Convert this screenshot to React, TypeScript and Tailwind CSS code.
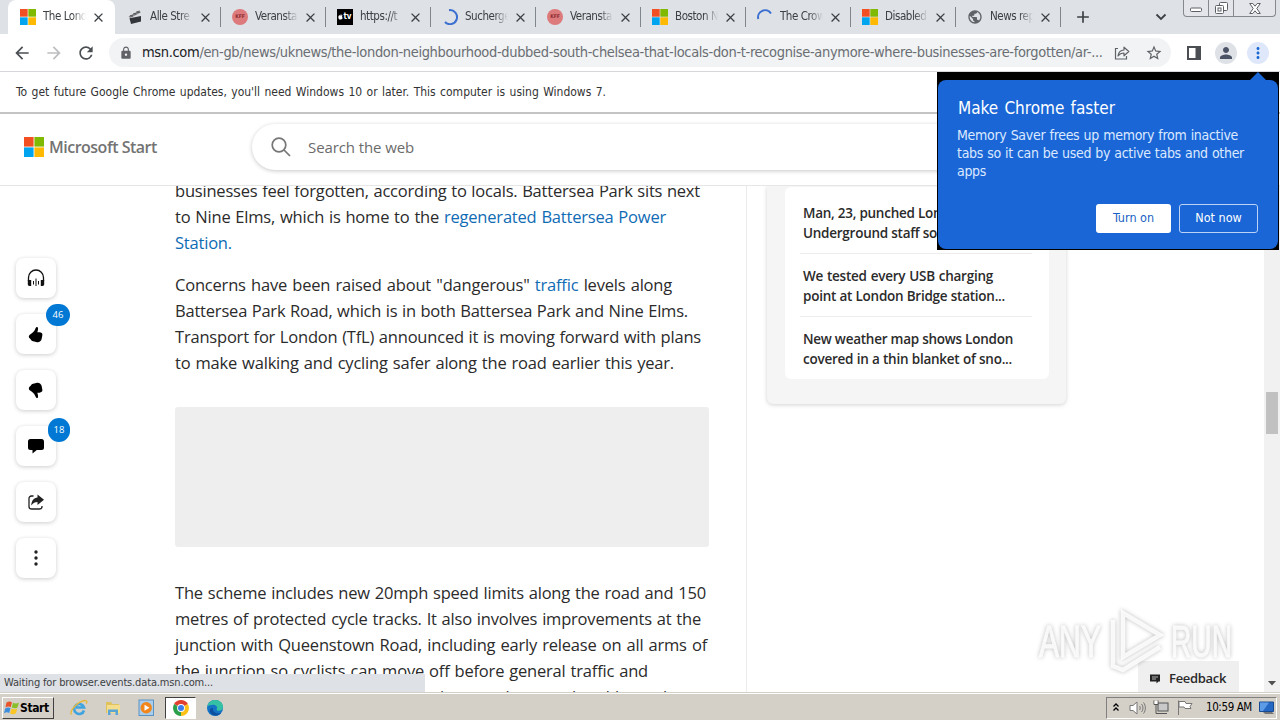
import type { ReactNode } from "react";
import {
  MdAdd,
  MdArrowBack,
  MdArrowForward,
  MdClose,
  MdLock,
  MdMoreVert,
  MdPerson,
  MdPublic,
  MdRefresh,
  MdStarBorder,
} from "react-icons/md";

function MicrosoftLogo({ className }: { className: string }) {
  return (
    <svg viewBox="0 0 20 20" className={className}>
      <path d="M0 0h9.6v9.6H0z" fill="#f25022" />
      <path d="M10.4 0H20v9.6h-9.6z" fill="#7fba00" />
      <path d="M0 10.4h9.6V20H0z" fill="#00a4ef" />
      <path d="M10.4 10.4H20V20h-9.6z" fill="#ffb900" />
    </svg>
  );
}

function Clapper() {
  return (
    <svg viewBox="0 0 16 16" className="h-4 w-4">
      <path d="M1.5 7.5 12.5 1.2 13.8 3.6 3.2 9z" fill="#8a8c8f" />
      <path d="m3 6.7 3 .3M6.3 4.7l3 .3M9.5 2.9l3 .3" stroke="#444" strokeWidth="1.1" />
      <path d="M2.5 9.2 14 7v5.6L4 15z" fill="#33373b" />
    </svg>
  );
}

function RedBadge() {
  return (
    <span className="flex h-4 w-4 items-center justify-center rounded-full bg-[#dc7a7c] text-[5px] font-bold text-[#8c2b30]">
      KFF
    </span>
  );
}

function AppleTv() {
  return (
    <span className="flex h-4 w-4 items-center justify-center bg-black text-[8px] font-bold text-white">
      <svg viewBox="0 0 6 7" className="h-[6px] w-[5px]">
        <path d="M3 1.8C2 1.2.4 1.6.4 3.7S1.8 6.8 3 6.4c1.2.4 2.4-.8 2.6-2-1-.5-1-1.7-.1-2.3C4.8 1.3 3.8 1.4 3 1.8zM3 1.4C3 .6 3.5.1 4.2 0c0 .8-.5 1.3-1.2 1.4z" fill="#fff" />
      </svg>
      tv
    </span>
  );
}

function Spinner({ d }: { d: string }) {
  return (
    <svg viewBox="0 0 16 16" className="h-4 w-4">
      <path d={d} fill="none" stroke="#3b6fd0" strokeWidth="2" />
    </svg>
  );
}

const tabs: { title: string; icon: ReactNode }[] = [
  { title: "Alle Stre", icon: <Clapper /> },
  { title: "Veransta", icon: <RedBadge /> },
  { title: "https://t", icon: <AppleTv /> },
  { title: "Sucherge", icon: <Spinner d="M7 1.200A7 7 0 1 1 3 13" /> },
  { title: "Veransta", icon: <RedBadge /> },
  { title: "Boston N", icon: <MicrosoftLogo className="h-4 w-4" /> },
  { title: "The Crow", icon: <Spinner d="M1.300 10A7 7 0 0 1 14 4.500" /> },
  { title: "Disabled", icon: <MicrosoftLogo className="h-4 w-4" /> },
  { title: "News rep", icon: <MdPublic className="h-4 w-4 text-[#5f6368]" /> },
];

function TabBody({ title, icon }: { title: string; icon: ReactNode }) {
  return (
    <>
      <span className="shrink-0">{icon}</span>
      <span className="ml-[7px] w-[43px] shrink-0 overflow-hidden whitespace-nowrap text-[11.5px] tracking-[-0.45px] [mask-image:linear-gradient(to_right,black_68%,transparent)]">
        {title}
      </span>
      <MdClose className="ml-[5px] h-[15px] w-[15px] shrink-0 text-[#3c4043]" />
    </>
  );
}

function TabStrip() {
  return (
    <div className="flex h-[34px] bg-[#dee1e6] text-[#3c4043]">
      <div className="ml-2 flex w-[107px] items-center rounded-t-lg bg-white pl-3">
        <TabBody title="The Lond" icon={<MicrosoftLogo className="h-4 w-4" />} />
      </div>
      {tabs.map((t, i) => (
        <div key={i} className="flex w-[105px] items-center pl-3">
          <TabBody title={t.title} icon={t.icon} />
          <span className="-mr-px ml-auto h-5 w-px bg-[#80868b]" />
        </div>
      ))}
      <div className="flex flex-1 items-center pl-[13px]">
        <MdAdd className="h-[20px] w-[20px]" />
        <svg viewBox="0 0 12 8" className="ml-[62px] h-2 w-3">
          <path d="m1.500 1.500 4.500 4.500 4.500-4.500" fill="none" stroke="#3c4043" strokeWidth="1.800" />
        </svg>
        <div className="ml-4 flex h-[17px] w-[93px] self-start rounded-b-[4px] border border-t-0 border-[#85888d] bg-[#e3e5ea]">
          <div className="flex w-[25px] items-center justify-center border-r border-[#85888d]">
            <svg viewBox="0 0 12 10" className="h-[10px] w-3">
              <rect x=".5" y="5" width="11" height="3.500" rx="1" fill="#fff" stroke="#5c6066" />
            </svg>
          </div>
          <div className="flex w-[25px] items-center justify-center border-r border-[#85888d]">
            <svg viewBox="0 0 13 13" className="h-[13px] w-[13px]" fill="#fff" stroke="#5c6066">
              <rect x="4.500" y=".5" width="8" height="8" rx="1" />
              <rect x=".5" y="3.500" width="8" height="8" rx="1" />
              <rect x="3" y="6" width="3" height="3" />
            </svg>
          </div>
          <div className="flex flex-1 items-center justify-center">
            <svg viewBox="0 0 12 11" className="h-[11px] w-3">
              <path d="M.7.500h3.100L6 3.200 8.200.500h3.100L7.800 5.500l3.500 5H8.200L6 7.800l-2.200 2.700H.7l3.500-5z" fill="#fff" stroke="#5c6066" />
            </svg>
          </div>
        </div>
      </div>
    </div>
  );
}

function Toolbar() {
  return (
    <div className="flex h-[38px] items-center border-b border-[#d5d7da] bg-white text-[#5f6368]">
      <MdArrowBack className="ml-3 h-5 w-5 text-[#4b4f53]" />
      <MdArrowForward className="ml-3 h-5 w-5 text-[#bcbec1]" />
      <MdRefresh className="ml-3 h-5 w-5 text-[#4b4f53]" />
      <div className="ml-[13px] flex h-[29px] w-[1062px] items-center rounded-full bg-[#f1f3f4] pl-[10px]">
        <MdLock className="h-[14px] w-[14px]" />
        <div className="ml-[9px] w-[958px] whitespace-nowrap text-[14.5px] tracking-[-0.345px] text-[#6a6e73]">
          <span className="text-[#202124]">msn.com</span>
          /en-gb/news/uknews/the-london-neighbourhood-dubbed-south-chelsea-that-locals-don-t-recognise-anymore-where-businesses-are-forgotten/ar-...
        </div>
        <svg viewBox="0 0 16 16" className="ml-[14px] h-4 w-4 shrink-0" fill="none" stroke="#5f6368" strokeWidth="1.200">
          <path d="M4 3.500H1.500V14h11v-3" />
          <path d="M4 11c.5-4 3-5.800 6-6V2.200L14.800 6.500 10 10.800V8C7.500 8 5.500 9 4 11z" strokeLinejoin="round" />
        </svg>
        <MdStarBorder className="ml-[15px] h-[18px] w-[18px] shrink-0" />
      </div>
      <svg viewBox="0 0 14 14" className="ml-4 h-[14px] w-[14px]">
        <rect x="1" y="1" width="12" height="12" fill="none" stroke="#4b4f53" strokeWidth="2" />
        <rect x="8.500" y="1" width="5" height="12" fill="#4b4f53" />
      </svg>
      <span className="ml-[14px] flex h-[22px] w-[22px] items-center justify-center rounded-full bg-[#dee1e6]">
        <MdPerson className="h-[18px] w-[18px] text-[#4b5366]" />
      </span>
      <span className="ml-[10px] flex h-[22px] w-[22px] items-center justify-center rounded-full bg-[#dfe8fb]">
        <MdMoreVert className="h-[18px] w-[18px] text-[#1a67d2]" />
      </span>
    </div>
  );
}

function SiteHeader() {
  return (
    <div className="flex h-[72px] shrink-0 items-center border-b border-[#e6e6e6] bg-white pb-[5px] font-['Open_Sans','Noto_Sans',sans-serif]">
      <MicrosoftLogo className="ml-6 h-5 w-5" />
      <span className="ml-[5px] text-[16px] font-semibold tracking-[-0.5px] text-[#737373]">Microsoft Start</span>
      <div className="ml-auto mr-[60px] flex h-[46px] w-[968px] items-center rounded-full bg-white pl-[19px] shadow-[0_1px_4px_rgba(0,0,0,0.22)]">
        <svg viewBox="0 0 20 20" className="h-5 w-5" fill="none" stroke="#767676" strokeWidth="1.700">
          <circle cx="8" cy="8" r="6.800" />
          <path d="m13 13 6 6" />
        </svg>
        <span className="ml-[17px] text-[15px] tracking-[-0.1px] text-[#6b6b6b]">Search the web</span>
      </div>
    </div>
  );
}

function RailButton({ children, badge }: { children: ReactNode; badge?: ReactNode }) {
  return (
    <div className="relative flex h-10 w-10 items-center justify-center rounded-lg bg-white shadow-[0_1px_4px_rgba(0,0,0,0.2)]">
      {children}
      {badge}
    </div>
  );
}

const thumb =
  "M8.800.800c.9-.6 1.900 0 1.900 1.400 0 1.500-.4 2.800-.8 4h2.400c1.700 0 3.300 1.200 3 2.700l-.8 4.500c-.5 2.200-2.600 3.700-4.900 3.300l-4.100-.9c-1.500-.3-2.200-1.200-2.700-2.200L1.200 12c-.6-1.300-.3-2.800 1-3.600 2.800-1.700 4.500-3.400 5.400-5.600.4-.9.6-1.600 1.200-2z";

function ActionRail() {
  return (
    <div className="flex w-[175px] flex-col gap-4 pl-4 pt-[72px]">
      <RailButton>
        <svg viewBox="0 0 18 18" className="h-[18px] w-[18px]">
          <path d="M1.500 12V8.500a7.500 7.500 0 0 1 15 0V12" fill="none" stroke="#111" strokeWidth="1.300" />
          <path d="M.800 11h3.400v6H2.500C1.300 17 .800 16 .800 15zM17.200 11h-3.400v6h1.700c1.200 0 1.700-1 1.700-2z" fill="#111" />
          <path d="M6.500 12v3.500M9 9.500v7.500M11.500 12v3.500" stroke="#111" />
        </svg>
      </RailButton>
      <RailButton
        badge={
          <span className="absolute -top-[10px] left-[30px] flex h-[22px] w-6 items-center justify-center rounded-full bg-[#0078d4] text-[9.5px] text-white">
            46
          </span>
        }
      >
        <svg viewBox="0 0 17 17" className="h-[17px] w-4">
          <path d={thumb} />
        </svg>
      </RailButton>
      <RailButton>
        <svg viewBox="0 0 17 17" className="h-[17px] w-4 -scale-y-100">
          <path d={thumb} />
        </svg>
      </RailButton>
      <RailButton
        badge={
          <span className="absolute -top-2 left-8 flex h-6 w-[22px] items-center justify-center rounded-full bg-[#0078d4] text-[9.5px] text-white">
            18
          </span>
        }
      >
        <svg viewBox="0 0 16 16" className="h-4 w-4">
          <path d="M2.500 1h11C15.200 1 16 2 16 3.500v6c0 1.700-.8 2.500-2.500 2.500H8.800L4.500 15.500V12h-2C.800 12 0 11.200 0 9.500v-6C0 2 .800 1 2.500 1z" />
        </svg>
      </RailButton>
      <RailButton>
        <svg viewBox="0 0 16 16" className="h-4 w-4">
          <path d="M5.500 2H3.500C2 2 1 3 1 4.500v8C1 14 2 15 3.500 15h8c1.500 0 2.500-1 2.500-2.500V12" fill="none" stroke="#222" strokeWidth="1.300" />
          <path d="M9.500.500 16 5.700l-6.500 5.200V8C7 8 5 9 3.200 11.500 3.500 6.500 6 3.800 9.500 3.500z" fill="#222" />
        </svg>
      </RailButton>
      <RailButton>
        <svg viewBox="0 0 4 16" className="h-4 w-1" fill="#222">
          <circle cx="2" cy="2" r="1.700" />
          <circle cx="2" cy="8" r="1.700" />
          <circle cx="2" cy="14" r="1.700" />
        </svg>
      </RailButton>
    </div>
  );
}

function Line({ className, children }: { className: string; children: ReactNode }) {
  return <span className={`block whitespace-nowrap [text-align-last:justify] ${className}`}>{children}</span>;
}

function Article() {
  return (
    <div className="-mt-2 w-[534px] shrink-0 text-[16.5px] leading-[26px] tracking-[-0.2px] text-[#2b2b2b]">
      <p>
        <Line className="w-[525px]">businesses feel forgotten, according to locals. Battersea Park sits next</Line>
        <Line className="w-[491px]">
          to Nine Elms, which is home to the <a className="text-[#0f6cb4]">regenerated Battersea Power</a>
        </Line>
        <Line className="w-[57px]">
          <a className="text-[#0f6cb4]">Station.</a>
        </Line>
      </p>
      <p className="mt-4">
        <Line className="w-[497px]">
          Concerns have been raised about "dangerous" <a className="text-[#0f6cb4]">traffic</a> levels along
        </Line>
        <Line className="w-[513px]">Battersea Park Road, which is in both Battersea Park and Nine Elms.</Line>
        <Line className="w-[526px]">Transport for London (TfL) announced it is moving forward with plans</Line>
        <Line className="w-[499px]">to make walking and cycling safer along the road earlier this year.</Line>
      </p>
      <div className="mt-[31px] h-[140px] rounded-[3px] bg-[#eeeeee]" />
      <p className="mt-[33px]">
        <Line className="w-[531px]">The scheme includes new 20mph speed limits along the road and 150</Line>
        <Line className="w-[526px]">metres of protected cycle tracks. It also involves improvements at the</Line>
        <Line className="w-[532px]">junction with Queenstown Road, including early release on all arms of</Line>
        <Line className="w-[473px]">the junction so cyclists can move off before general traffic and</Line>
        <Line className="ml-[265px] w-[235px]">is set to be completed by early</Line>
      </p>
    </div>
  );
}

function RelatedStories() {
  return (
    <div className="h-[218px] w-[299px] rounded-b-md bg-[#f5f5f5] px-[18px] pt-px shadow-[0_1px_4px_rgba(0,0,0,0.18)]">
      <div className="h-[192px] w-[264px] rounded-md bg-white pl-[15px] pr-[17px] pt-4 text-[13.5px] font-semibold leading-5 tracking-[-0.25px] text-[#2b2b2b]">
        <div className="border-b border-[#ededed] pb-[10px] pl-[3px]">
          <Line className="w-[160px]">Man, 23, punched London</Line>
          <Line className="w-[145px]">Underground staff so h</Line>
        </div>
        <div className="border-b border-[#ededed] pb-[10px] pl-[3px] pt-3">
          <Line className="w-[190px]">We tested every USB charging</Line>
          <Line className="w-[202px]">point at London Bridge station...</Line>
        </div>
        <div className="pl-[3px] pt-3">
          <Line className="w-[208px]">New weather map shows London</Line>
          <Line className="w-[209px]">covered in a thin blanket of sno...</Line>
        </div>
      </div>
    </div>
  );
}

function Scrollbar() {
  return (
    <div className="ml-auto flex w-4 flex-col items-center bg-[#f1f1f1]">
      <div className="mt-[206px] h-[42px] w-3 bg-[#c1c1c1]" />
      <svg viewBox="0 0 8 5" className="mb-[6px] mt-auto h-[5px] w-2">
        <path d="M0 0h8L4 4.500z" fill="#505050" />
      </svg>
    </div>
  );
}

function MemorySaver() {
  return (
    <div className="absolute left-[937px] top-[72px] h-[178px] w-[342px] bg-black px-px pt-2 font-['DejaVu_Sans_Condensed','Noto_Sans',sans-serif]">
      <svg viewBox="0 0 18 9" className="absolute left-[312px] top-0 h-[9px] w-[18px]">
        <path d="M0 9 9 0l9 9z" fill="#1a66d6" />
      </svg>
      <div className="h-[169px] rounded-lg bg-[#1a66d6] pl-[19px] pr-5 pt-[17px] text-white">
        <h2 className="pl-px text-[17px] leading-[22px]">
          <Line className="w-[157px]">Make Chrome faster</Line>
        </h2>
        <p className="mt-[7px] text-[14px] leading-[18px] tracking-[-0.3px] text-[#dce9ff]">
          <Line className="w-[281px]">Memory Saver frees up memory from inactive</Line>
          <Line className="w-[287px]">tabs so it can be used by active tabs and other</Line>
          apps
        </p>
        <div className="mt-6 flex justify-end gap-2 text-[12.5px]">
          <button className="h-[29px] w-[75px] rounded-[3px] bg-white text-[#1a5fc4]">Turn on</button>
          <button className="h-[29px] w-[79px] rounded-[3px] border border-[#bcd3f7]">Not now</button>
        </div>
      </div>
    </div>
  );
}

function Watermark() {
  return (
    <svg
      viewBox="0 0 196 66"
      className="absolute left-[1037px] top-[608px] h-[66px] w-[196px] drop-shadow-[0_0_2px_rgba(0,0,0,0.3)]"
      fill="none"
      stroke="#fff"
    >
      <g fill="#fff" strokeWidth="1" fontFamily="Liberation Sans" fontSize="44" opacity="0.85">
        <text x="2" y="49" textLength="62" lengthAdjust="spacingAndGlyphs">ANY</text>
        <text x="134" y="49" textLength="61" lengthAdjust="spacingAndGlyphs">RUN</text>
      </g>
      <path d="M86 5v44l37-22z" strokeWidth="4.500" opacity="0.85" />
      <path d="M76 12v46l10 4 37-23" strokeWidth="4.500" opacity="0.85" />
    </svg>
  );
}

function FeedbackButton() {
  return (
    <div className="absolute left-[1138px] top-[661px] flex h-[31px] w-[101px] items-center bg-[#efefef] pl-[11px] pt-1 font-['Open_Sans','Noto_Sans',sans-serif] text-[13px] font-semibold text-[#2b2b2b]">
      <svg viewBox="0 0 12 10" className="h-[10px] w-3">
        <path d="M1 .5h10v7H9.500L7.500 9.500V7.500H1z" fill="#222" />
        <path d="M3 3h6M3 5h4" stroke="#ddd" strokeWidth=".8" />
      </svg>
      <span className="ml-2 tracking-[-0.3px]">Feedback</span>
    </div>
  );
}

function Taskbar() {
  return (
    <div className="flex h-7 shrink-0 items-center border-t border-[#d4d0c8] bg-[#d4d0c8] text-black shadow-[inset_0_1px_0_#fff]">
      <div className="ml-[2px] mt-[2px] flex h-[22px] w-[52px] items-center border border-b-[#404040] border-l-white border-r-[#404040] border-t-white text-[12px] font-bold">
        <svg viewBox="0 0 16 16" className="ml-px h-4 w-4 shrink-0">
          <path d="M2.500 2.500c2-1.300 4-1.200 5.500-.2L6.700 7.200c-1.600-1-3.300-1-5.300.2z" fill="#e8542a" />
          <path d="M9 2.700c2 1 4 1 6-.2L13.500 7.400c-2 1.200-4 1.200-5.800.2z" fill="#8bbf2a" />
          <path d="M1.200 8.400c2-1.200 3.700-1.200 5.300-.2L5.200 13c-1.600-1-3.200-1-5.200.2z" fill="#3e8ede" />
          <path d="M7.400 8.600c2 1 4 1 5.900-.2L12 13.200c-2 1.200-4 1.200-5.900.2z" fill="#f9c623" />
        </svg>
        <span className="tracking-[-0.4px]">Start</span>
      </div>
      <svg viewBox="0 0 18 18" className="ml-4 mt-[2px] h-[18px] w-[18px]">
        <path d="M14 11.500A5 5 0 1 1 14 8.500H6" fill="none" stroke="#3fa3e0" strokeWidth="2.600" />
        <path d="M1.500 15.500C-1 12 8 2.500 14.500 1.500c3-.3 2.500 2 1.800 3.200" fill="none" stroke="#e5b93c" strokeWidth="1.400" />
      </svg>
      <svg viewBox="0 0 18 18" className="ml-4 mt-[2px] h-[18px] w-[18px]">
        <path d="M2 3h5l1.500 2H15v9H2z" fill="#dfc25c" />
        <path d="M3 6h13v8H3z" fill="#f4de8c" />
        <path d="M4 16v-5.500h10V16h-2.500v-3h-5v3z" fill="#5ba5d4" />
      </svg>
      <svg viewBox="0 0 18 18" className="ml-4 mt-[2px] h-[18px] w-[18px]">
        <rect x="1" y="1" width="14.500" height="15.500" fill="#a9cdea" stroke="#5a92c4" />
        <circle cx="8.200" cy="8.700" r="5.700" fill="#f1861c" />
        <path d="m6.500 5.700 5 3-5 3z" fill="#fff" />
      </svg>
      <div className="ml-[9px] mt-[2px] flex h-[22px] w-[31px] items-center justify-center border border-b-white border-l-[#404040] border-r-white border-t-[#404040] bg-white">
        <svg viewBox="0 0 16 16" className="h-4 w-4">
          <path d="M8 8 1.100 4A8 8 0 0 1 14.900 4z" fill="#e2402f" />
          <path d="M8 8 14.900 4A8 8 0 0 1 8 16z" fill="#fbc116" />
          <path d="M8 8v8A8 8 0 0 1 1.100 4z" fill="#2c9f4b" />
          <circle cx="8" cy="8" r="3.900" fill="#fff" />
          <circle cx="8" cy="8" r="3" fill="#3b7ded" />
        </svg>
      </div>
      <svg viewBox="0 0 16 16" className="ml-[11px] mt-[2px] h-4 w-4">
        <circle cx="8" cy="8" r="8" fill="#1473c4" />
        <path d="M.3 7C1 2.500 4.500 0 8.300 0c4.600 0 7.700 3.300 7.700 6.700 0 2.500-1.800 4-4 4-1.800 0-2.700-.7-2.300-1.500C11 7 9 4.800 6 4.800 3.500 4.800 1.200 5.700.3 7z" fill="#35c1a4" />
        <path d="M6 8c-.8 3.500 2.500 6.500 8 5-3.500 4-9.500 3-11-1C2.200 9.500 4 7.500 6 8z" fill="#0d4f9e" />
      </svg>
      <div className="ml-auto mt-[2px] flex h-[22px] w-[171px] items-center border border-b-white border-l-[#808080] border-r-white border-t-[#808080] pl-[6px] text-[11.5px]">
        <svg viewBox="0 0 6 9" className="h-[9px] w-[6px]" fill="none" stroke="#000" strokeWidth="1.300">
          <path d="m.5 4 2.500-2.500L5.500 4M.5 8 3 5.500 5.500 8" transform="matrix(1 0 0 1 0 -.5)" />
        </svg>
        <svg viewBox="0 0 17 14" className="ml-[10px] h-[14px] w-[17px]" fill="none" stroke="#777">
          <path d="M1 4.500h3L8 1v12L4 9.500H1z" fill="#fff" />
          <path d="M10.500 5c1 1 1 3 0 4M12.500 3c2 2 2 6 0 8M14.500 1.500c2.500 3 2.500 8 0 11" />
        </svg>
        <svg viewBox="0 0 16 15" className="ml-[7px] h-[15px] w-4" fill="none" stroke="#555">
          <rect x="5" y="3" width="10" height="8" fill="#c9c9c9" />
          <path d="M7 13.500h7M1 .5v4h4v-4M3 4.500v9h4" stroke="#555" />
          <path d="M1.500 1h3v3h-3z" fill="#fff" stroke="none" />
        </svg>
        <svg viewBox="0 0 16 15" className="ml-2 h-[15px] w-4" fill="#fff" stroke="#777">
          <path d="M1.500.5V15M2 1.500h6l1 2h6l-2 3 1 2H8l-1-1.500H2z" />
        </svg>
        <span className="ml-[13px] w-[46px] whitespace-nowrap tracking-[-0.4px]">10:59 AM</span>
        <svg viewBox="0 0 16 14" className="ml-[7px] h-[14px] w-4 shrink-0">
          <path d="M.5 1h14v9.500H.500z" fill="#2568c4" stroke="#184a91" />
          <path d="M1 1.500h9L4 10H1z" fill="#5d9be6" />
          <path d="M4 11h9l2 2H6z" fill="#777" />
        </svg>
      </div>
      <div className="w-[3px]" />
    </div>
  );
}

export default function App() {
  return (
    <main className="relative flex h-[720px] w-[1280px] flex-col overflow-hidden bg-white font-['DejaVu_Sans_Condensed','Noto_Sans',sans-serif]">
      <TabStrip />
      <Toolbar />
      <div className="flex h-[42px] shrink-0 items-center border-b-2 border-[#c4c4c4] bg-white pl-4 text-[12px] text-[#333]">
        <Line className="w-[590px]">
          To get future Google Chrome updates, you'll need Windows 10 or later. This computer is using Windows 7.
        </Line>
      </div>
      <SiteHeader />
      <div className="flex min-h-0 flex-1 overflow-hidden font-['Open_Sans','Noto_Sans',sans-serif]">
        <ActionRail />
        <Article />
        <div className="ml-[37px] mr-5 w-px bg-[#ececec]" />
        <RelatedStories />
        <Scrollbar />
      </div>
      <Taskbar />
      <div className="absolute left-0 top-[674px] flex h-[18px] w-[425px] items-center bg-[#dee1e6] pl-1 text-[11px] tracking-[-0.15px] text-[#3c4043]">
        <Line className="w-[209px]">Waiting for browser.events.data.msn.com...</Line>
      </div>
      <FeedbackButton />
      <Watermark />
      <MemorySaver />
    </main>
  );
}
